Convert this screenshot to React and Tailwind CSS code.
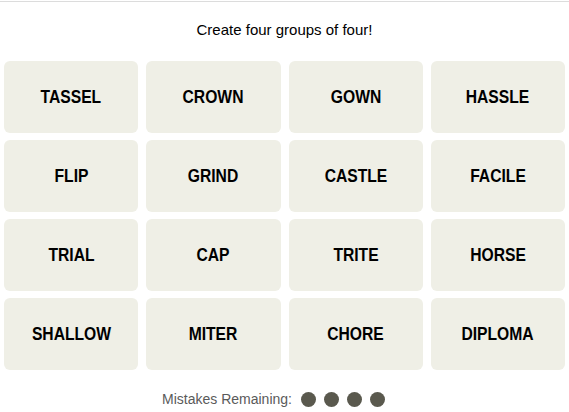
const words = [
  'TASSEL', 'CROWN', 'GOWN', 'HASSLE',
  'FLIP', 'GRIND', 'CASTLE', 'FACILE',
  'TRIAL', 'CAP', 'TRITE', 'HORSE',
  'SHALLOW', 'MITER', 'CHORE', 'DIPLOMA',
];

export default function App() {
  return (
    <div className="w-[569px] h-[412px] bg-white font-['Liberation_Sans',sans-serif] text-black">
      <div className="h-px mt-px bg-[#dcdcdc]" />
      <p className="mt-[18px] text-center text-[15px] leading-5">Create four groups of four!</p>

      {/* tiles */}
      <div className="mt-[21px] px-1 grid grid-cols-4 gap-x-2 gap-y-[7px]">
        {words.map((w) => (
          <div
            key={w}
            className="h-[72px] rounded-md bg-[#efefe6] flex items-center justify-center font-bold text-[18px]"
          >
            <span className="inline-block scale-x-[0.87]">{w}</span>
          </div>
        ))}
      </div>

      <div className="mt-[19px] flex items-center justify-center">
        <span className="text-[14px] text-[#5a5a5a] mr-[9px]">Mistakes Remaining:</span>
        <div className="flex gap-2 mr-[22px]">
          {[0, 1, 2, 3].map((i) => (
            <span key={i} className="w-[15px] h-[15px] rounded-full bg-[#5a594e]" />
          ))}
        </div>
      </div>
    </div>
  );
}
